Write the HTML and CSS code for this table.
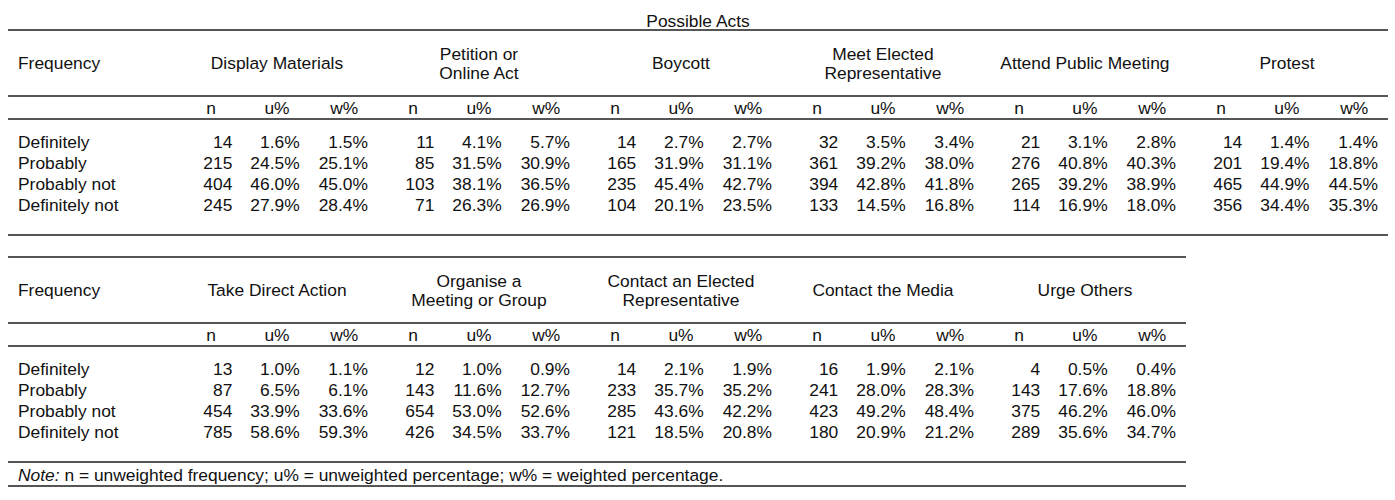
FILE: index.html
```html
<!DOCTYPE html>
<html lang="en">
<head>
<meta charset="utf-8">
<title>Possible Acts</title>
<link rel="stylesheet" href="styles.css">
</head>
<body>
<div class="page">
<table class="acts acts-wide">
<caption>Possible Acts</caption>
<colgroup><col class="c-label"><col span="18"></colgroup>
<thead>
<tr class="group-row">
<th class="label">Frequency</th>
<th colspan="3">Display Materials</th>
<th colspan="3">Petition or<br>Online Act</th>
<th colspan="3">Boycott</th>
<th colspan="3">Meet Elected<br>Representative</th>
<th colspan="3">Attend Public Meeting</th>
<th colspan="3">Protest</th>
</tr>
<tr class="sub-row">
<th></th>
<th>n</th><th>u%</th><th>w%</th>
<th>n</th><th>u%</th><th>w%</th>
<th>n</th><th>u%</th><th>w%</th>
<th>n</th><th>u%</th><th>w%</th>
<th>n</th><th>u%</th><th>w%</th>
<th>n</th><th>u%</th><th>w%</th>
</tr>
</thead>
<tbody>
<tr class="spacer-top"><td colspan="19"></td></tr>
<tr class="data">
<td class="label">Definitely</td>
<td class="n">14</td><td class="u">1.6%</td><td class="w">1.5%</td>
<td class="n">11</td><td class="u">4.1%</td><td class="w">5.7%</td>
<td class="n">14</td><td class="u">2.7%</td><td class="w">2.7%</td>
<td class="n">32</td><td class="u">3.5%</td><td class="w">3.4%</td>
<td class="n">21</td><td class="u">3.1%</td><td class="w">2.8%</td>
<td class="n">14</td><td class="u">1.4%</td><td class="w">1.4%</td>
</tr>
<tr class="data">
<td class="label">Probably</td>
<td class="n">215</td><td class="u">24.5%</td><td class="w">25.1%</td>
<td class="n">85</td><td class="u">31.5%</td><td class="w">30.9%</td>
<td class="n">165</td><td class="u">31.9%</td><td class="w">31.1%</td>
<td class="n">361</td><td class="u">39.2%</td><td class="w">38.0%</td>
<td class="n">276</td><td class="u">40.8%</td><td class="w">40.3%</td>
<td class="n">201</td><td class="u">19.4%</td><td class="w">18.8%</td>
</tr>
<tr class="data">
<td class="label">Probably not</td>
<td class="n">404</td><td class="u">46.0%</td><td class="w">45.0%</td>
<td class="n">103</td><td class="u">38.1%</td><td class="w">36.5%</td>
<td class="n">235</td><td class="u">45.4%</td><td class="w">42.7%</td>
<td class="n">394</td><td class="u">42.8%</td><td class="w">41.8%</td>
<td class="n">265</td><td class="u">39.2%</td><td class="w">38.9%</td>
<td class="n">465</td><td class="u">44.9%</td><td class="w">44.5%</td>
</tr>
<tr class="data">
<td class="label">Definitely not</td>
<td class="n">245</td><td class="u">27.9%</td><td class="w">28.4%</td>
<td class="n">71</td><td class="u">26.3%</td><td class="w">26.9%</td>
<td class="n">104</td><td class="u">20.1%</td><td class="w">23.5%</td>
<td class="n">133</td><td class="u">14.5%</td><td class="w">16.8%</td>
<td class="n">114</td><td class="u">16.9%</td><td class="w">18.0%</td>
<td class="n">356</td><td class="u">34.4%</td><td class="w">35.3%</td>
</tr>
<tr class="spacer-bottom"><td colspan="19"></td></tr>
</tbody>
</table>

<table class="acts acts-narrow">
<colgroup><col class="c-label"><col span="15"></colgroup>
<thead>
<tr class="group-row">
<th class="label">Frequency</th>
<th colspan="3">Take Direct Action</th>
<th colspan="3">Organise a<br>Meeting or Group</th>
<th colspan="3">Contact an Elected<br>Representative</th>
<th colspan="3">Contact the Media</th>
<th colspan="3">Urge Others</th>
</tr>
<tr class="sub-row">
<th></th>
<th>n</th><th>u%</th><th>w%</th>
<th>n</th><th>u%</th><th>w%</th>
<th>n</th><th>u%</th><th>w%</th>
<th>n</th><th>u%</th><th>w%</th>
<th>n</th><th>u%</th><th>w%</th>
</tr>
</thead>
<tbody>
<tr class="spacer-top"><td colspan="16"></td></tr>
<tr class="data">
<td class="label">Definitely</td>
<td class="n">13</td><td class="u">1.0%</td><td class="w">1.1%</td>
<td class="n">12</td><td class="u">1.0%</td><td class="w">0.9%</td>
<td class="n">14</td><td class="u">2.1%</td><td class="w">1.9%</td>
<td class="n">16</td><td class="u">1.9%</td><td class="w">2.1%</td>
<td class="n">4</td><td class="u">0.5%</td><td class="w">0.4%</td>
</tr>
<tr class="data">
<td class="label">Probably</td>
<td class="n">87</td><td class="u">6.5%</td><td class="w">6.1%</td>
<td class="n">143</td><td class="u">11.6%</td><td class="w">12.7%</td>
<td class="n">233</td><td class="u">35.7%</td><td class="w">35.2%</td>
<td class="n">241</td><td class="u">28.0%</td><td class="w">28.3%</td>
<td class="n">143</td><td class="u">17.6%</td><td class="w">18.8%</td>
</tr>
<tr class="data">
<td class="label">Probably not</td>
<td class="n">454</td><td class="u">33.9%</td><td class="w">33.6%</td>
<td class="n">654</td><td class="u">53.0%</td><td class="w">52.6%</td>
<td class="n">285</td><td class="u">43.6%</td><td class="w">42.2%</td>
<td class="n">423</td><td class="u">49.2%</td><td class="w">48.4%</td>
<td class="n">375</td><td class="u">46.2%</td><td class="w">46.0%</td>
</tr>
<tr class="data">
<td class="label">Definitely not</td>
<td class="n">785</td><td class="u">58.6%</td><td class="w">59.3%</td>
<td class="n">426</td><td class="u">34.5%</td><td class="w">33.7%</td>
<td class="n">121</td><td class="u">18.5%</td><td class="w">20.8%</td>
<td class="n">180</td><td class="u">20.9%</td><td class="w">21.2%</td>
<td class="n">289</td><td class="u">35.6%</td><td class="w">34.7%</td>
</tr>
<tr class="spacer-bottom"><td colspan="16"></td></tr>
</tbody>
<tfoot>
<tr class="note-row"><td colspan="16"><em>Note:</em> n = unweighted frequency; u% = unweighted percentage; w% = weighted percentage.</td></tr>
</tfoot>
</table>
</div>
</body>
</html>
```
FILE: styles.css
```css
html, body {
  margin: 0;
  padding: 0;
  background: #fff;
}

body {
  font-family: "Liberation Sans", Arial, sans-serif;
  font-size: 17.4px;
  color: #111;
}

.page {
  padding: 12px 0 0 8px;
}

.acts {
  table-layout: fixed;
  border-collapse: separate;
  border-spacing: 0;
  border-top: 2px solid #555;
}

.acts-wide {
  width: 1380px;
}

.acts-narrow {
  width: 1178px;
  margin-top: 20px;
}

.c-label {
  width: 168px;
}

.acts caption {
  caption-side: top;
  text-align: center;
  padding: 1px 0 0;
  line-height: 16px;
}

.acts th {
  font-weight: normal;
  padding: 0;
  text-align: center;
}

.group-row th {
  padding: 14px 0 13px;
  line-height: 18.5px;
  vertical-align: middle;
  border-bottom: 2px solid #555;
}

.group-row th.label {
  text-align: left;
  padding-left: 10px;
}

.sub-row th {
  padding: 3px 0 1px;
  line-height: 17px;
  border-bottom: 2px solid #555;
}

.sub-row th:nth-child(3n+2) {
  padding-left: 3px;
}

.spacer-top td {
  height: 12px;
  padding: 0;
  line-height: 0;
}

.spacer-bottom td {
  height: 18px;
  padding: 0;
  line-height: 0;
  border-bottom: 2px solid #555;
}

.data td {
  padding: 0;
  line-height: 21px;
  text-align: right;
  white-space: nowrap;
}

.data td.label {
  text-align: left;
  padding-left: 10px;
}

.data td.n {
  padding-right: 11px;
}

.data td.u {
  padding-right: 11px;
}

.data td.w {
  padding-right: 10px;
}

.note-row td {
  padding: 2px 0 0 10px;
  line-height: 20px;
  text-align: left;
  white-space: nowrap;
  border-bottom: 2px solid #555;
}
```
